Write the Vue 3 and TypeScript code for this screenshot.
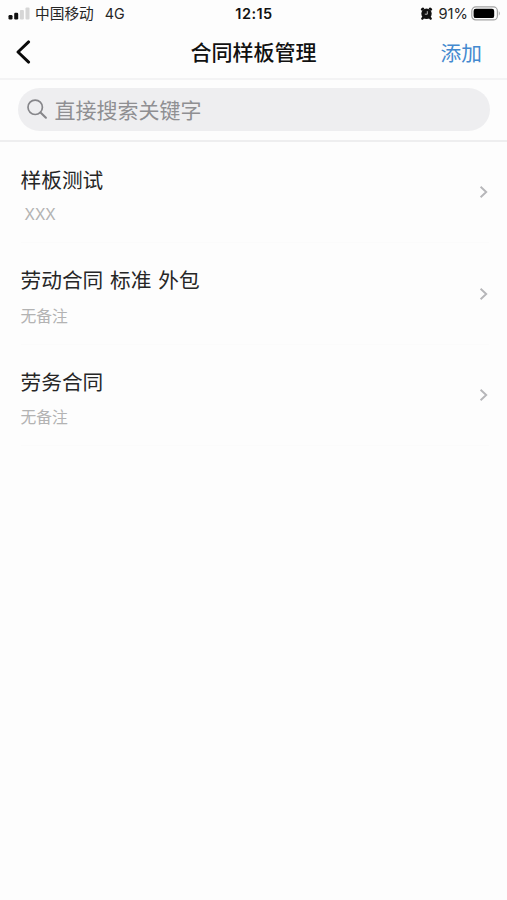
<script setup lang="ts">
interface Template {
  id: number
  title: string
  note: string
  indented?: boolean
}

const templates: Template[] = [
  { id: 1, title: '样板测试', note: 'XXX', indented: true },
  { id: 2, title: '劳动合同 标准 外包', note: '无备注' },
  { id: 3, title: '劳务合同', note: '无备注' },
]
</script>

<template>
  <main class="screen">
    <div class="status">
      <div class="status-left">
        <svg class="signal" width="22" height="13" viewBox="0 0 22 13">
          <rect x="0.5" y="8" width="4" height="4.5" rx="1.2" fill="#111" />
          <rect x="6.2" y="5.8" width="4" height="6.7" rx="1.2" fill="#111" />
          <rect x="11.9" y="3" width="4" height="9.5" rx="1" fill="#d6d6d6" />
          <rect x="17.5" y="0.5" width="4" height="12" rx="1" fill="#d6d6d6" />
        </svg>
        <span class="carrier">中国移动</span>
        <span class="network">4G</span>
      </div>
      <span class="time">12:15</span>
      <div class="status-right">
        <svg class="alarm" width="13" height="13" viewBox="0 0 13 13">
          <path d="M2.1 2.5 3 1.7M10.9 2.5 10 1.7M3.2 10.6l-.8 1M9.8 10.6l.8 1" stroke="#111" stroke-width="2.4" stroke-linecap="round" />
          <circle cx="6.5" cy="6.7" r="5.2" fill="#111" />
          <path d="M7.3 4.2V7.2H4.8" fill="none" stroke="#ccc" stroke-width="0.9" />
        </svg>
        <span class="percent">91%</span>
        <svg class="battery" width="30" height="15" viewBox="0 0 30 15">
          <rect x="0.8" y="0.9" width="25.6" height="13" rx="4" fill="#fff" stroke="#a3a3a3" stroke-width="1.2" />
          <rect x="2.6" y="2.7" width="20.6" height="9.4" rx="2.2" fill="#000" />
          <path d="M27.8 5q2 2.4 0 4.8z" fill="#a3a3a3" />
        </svg>
      </div>
    </div>

    <header class="nav">
      <button class="back" aria-label="返回">
        <svg width="16" height="24" viewBox="0 0 16 24">
          <path d="M13.6 1.9 3 12 13.6 22.1" fill="none" stroke="#0a0a0a" stroke-width="2.9" stroke-linecap="round" stroke-linejoin="round" />
        </svg>
      </button>
      <h1>合同样板管理</h1>
      <button class="add">添加</button>
    </header>

    <div class="search">
      <div class="field">
        <svg width="22" height="22" viewBox="0 0 22 22">
          <circle cx="8.2" cy="8.3" r="7.2" fill="none" stroke="#86868a" stroke-width="1.7" />
          <path d="m13.5 13.5 5.4 5.2" stroke="#86868a" stroke-width="2.1" stroke-linecap="round" />
        </svg>
        <span>直接搜索关键字</span>
      </div>
    </div>

    <ul class="list">
      <li v-for="item in templates" :key="item.id">
        <div class="info">
          <p class="title">{{ item.title }}</p>
          <p class="note" :class="{ indented: item.indented }">{{ item.note }}</p>
        </div>
        <svg width="10" height="14" viewBox="0 0 10 14">
          <path d="m1.6 1.8 5.6 5.2-5.6 5.2" fill="none" stroke="#b6b6b9" stroke-width="1.9" />
        </svg>
      </li>
    </ul>
  </main>
</template>

<style>
body {
  background: #fdfdfd;
}
</style>

<style scoped>
.screen {
  box-sizing: border-box;
  width: 100%;
  height: 900px;
  overflow: hidden;
  background: #fdfdfd;
  color: #262626;
  font-family: Inter, "Noto Sans CJK SC", sans-serif;
}
svg {
  display: block;
  flex: none;
}
button {
  border: 0;
  padding: 0;
  background: none;
  font-family: inherit;
}
.status {
  display: grid;
  grid-template-columns: 1fr auto 1fr;
  align-items: center;
  height: 27px;
  padding: 0 6px 0 8px;
  font-size: 14.7px;
  line-height: 27px;
  white-space: nowrap;
}
.status-left,
.status-right {
  display: flex;
  align-items: center;
}
.status-right {
  justify-content: flex-end;
}
.carrier {
  margin-left: 5px;
  padding-top: 1px;
  line-height: 26px;
}
.network {
  margin-left: 11px;
  font-size: 14.3px;
}
.time {
  margin-right: 1px;
  font-size: 14.5px;
  font-weight: 600;
  letter-spacing: 0.45px;
  color: #111;
}
.percent {
  margin: 0 3px 0 5px;
  padding-top: 1px;
  font-size: 14.7px;
  line-height: 26px;
}
.nav {
  display: grid;
  grid-template-columns: 1fr auto 1fr;
  align-items: center;
  box-sizing: border-box;
  height: 53px;
  padding: 0 25px 0 15px;
  border-bottom: 2px solid #f3f3f4;
}
.back {
  justify-self: start;
  margin-bottom: 2px;
}
h1 {
  margin: 1px 0 0 10px;
  font-size: 21px;
  line-height: 30px;
  font-weight: 500;
  color: #111;
}
.nav .add {
  justify-self: end;
  padding-top: 2px;
  font-size: 20.7px;
  line-height: 30px;
  color: #4389cf;
}
.search {
  box-sizing: border-box;
  height: 62px;
  padding: 8px 17px 9px 18px;
  border-bottom: 2px solid #eeeeef;
}
.field {
  display: flex;
  align-items: center;
  gap: 5.5px;
  height: 43px;
  padding-left: 9px;
  border-radius: 22px;
  background: #eeeef0;
  color: #8f8f92;
  font-size: 21px;
  line-height: 30px;
}
.field span {
  padding-top: 2px;
}
.list {
  margin: 0;
  padding: 0 18px 0 20.5px;
  list-style: none;
}
li {
  display: flex;
  align-items: center;
  justify-content: space-between;
  box-sizing: border-box;
  height: 101.4px;
  border-bottom: 1px solid #fbfbfb;
}
p {
  margin: 0;
}
.info {
  padding-top: 8px;
}
.title {
  font-size: 20.7px;
  line-height: 30px;
  word-spacing: 1px;
}
.note {
  margin-top: 8.5px;
  color: #b3b3b3;
  font-size: 15.8px;
  line-height: 24px;
}
.indented {
  margin-top: 7px;
  padding-left: 4px;
  font-size: 15.3px;
}
</style>
